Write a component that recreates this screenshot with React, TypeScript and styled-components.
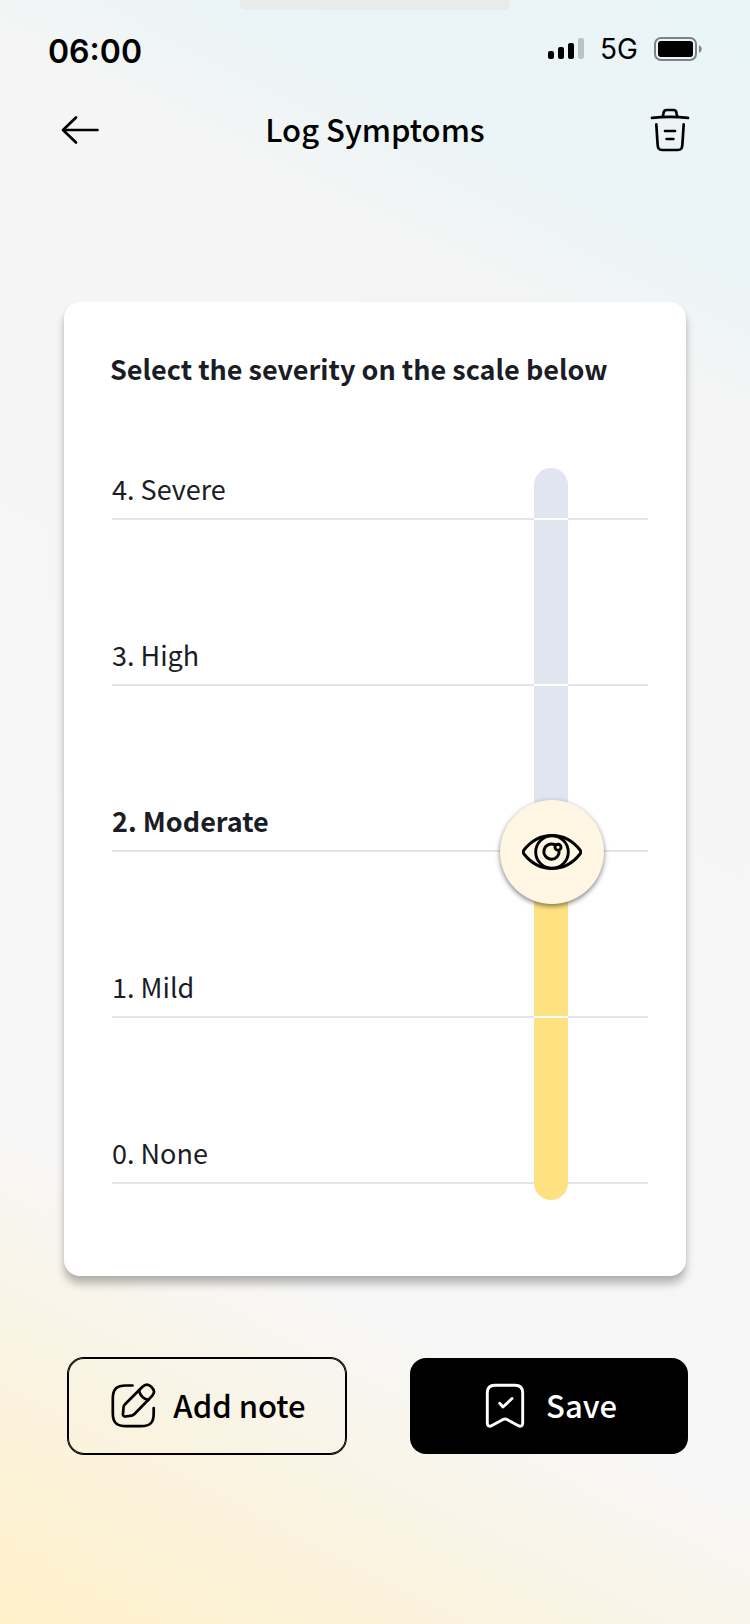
import React, { useState } from 'react';
import styled, { createGlobalStyle } from 'styled-components';

const GlobalStyle = createGlobalStyle`
  *, *::before, *::after { box-sizing: border-box; }
  html { height: 100%; }
  body {
    margin: 0;
    min-height: 100%;
    color: #000;
    font-family: "Source Sans Pro", "Noto Sans CJK JP", sans-serif;
  }
  h1, h2, ul { margin: 0; padding: 0; }
`;

const Screen = styled.div`
  display: flex;
  flex-direction: column;
  min-height: 100vh;
  padding-bottom: 64px;
  background: linear-gradient(27deg, #fff1c9 0%, #faf3e0 13%, #f7f7f7 25%, #f5f5f5 79%, #ebf4f6 86%, #eaf5f7 100%);
`;

const Grabber = styled.div`
  align-self: center;
  width: 36%;
  height: 10px;
  border-radius: 0 0 6px 6px;
  background: #e8ebea;
`;

const StatusBar = styled.div`
  display: flex;
  align-items: center;
  justify-content: space-between;
  height: 80px;
  padding: 0 48px;
  font-family: Inter, sans-serif;
`;

const Clock = styled.time`
  padding-top: 4px;
  font-size: 32px;
  font-weight: 600;
  line-height: 40px;
`;

const StatusIcons = styled.div`
  display: flex;
  align-items: center;
  gap: 16px;
  height: 44px;
  margin-bottom: 2px;
  font-size: 28px;
  line-height: 32px;
`;

const TopBar = styled.header`
  display: grid;
  grid-template-columns: 48px 1fr 48px;
  align-items: center;
  height: 80px;
  padding: 0 56px;
`;

const Title = styled.h1`
  padding-bottom: 2px;
  font-size: 31px;
  font-weight: 500;
  line-height: 46px;
  text-align: center;
`;

const IconButton = styled.button`
  display: flex;
  align-items: center;
  justify-content: center;
  width: 48px;
  height: 48px;
  padding: 0;
  border: 0;
  background: none;
  color: inherit;
  cursor: pointer;
`;

const Card = styled.section`
  margin: 132px 64px 0;
  padding: 47px 0 92px;
  border-radius: 16px;
  background: #fff;
  box-shadow: 0 8px 8px rgba(0, 0, 0, 0.25), 0 2px 4px rgba(0, 0, 0, 0.06);
  color: #1a1d26;
`;

const CardTitle = styled.h2`
  padding: 0 46px 1px;
  font-size: 27px;
  font-weight: 700;
  line-height: 40px;
`;

const Scale = styled.div`
  display: grid;
  grid-template-columns: 1fr 104px 44px;
  margin: 0 38px 0 48px;
`;

const Levels = styled.ul`
  grid-area: 1 / 1 / 2 / -1;
  list-style: none;
`;

const Level = styled.li<{ $active: boolean }>`
  display: flex;
  align-items: flex-end;
  height: 166px;
  padding-bottom: 9px;
  border-bottom: 2px solid #e0e7ec;
  font-size: 27px;
  font-weight: ${(p) => (p.$active ? 700 : 400)};
  line-height: 40px;

  &:first-child { height: 130px; }
`;

const Track = styled.div<{ $level: number }>`
  grid-area: 1 / 2;
  justify-self: center;
  width: 34px;
  margin: 78px 2px -16px 0;
  border-radius: 17px;
  background: linear-gradient(
    to top,
    #fee282 ${(p) => 16 + p.$level * 166}px,
    #e0e5ef ${(p) => 16 + p.$level * 166}px
  );
`;

const Tick = styled.div`
  height: 166px;
  border-bottom: 2px solid #fff;

  &:first-child { height: 52px; }
`;

const Slider = styled.input`
  grid-area: 1 / 2;
  z-index: 1;
  width: 104px;
  height: 768px;
  margin: 78px 0 -52px;
  appearance: none;
  writing-mode: vertical-lr;
  direction: rtl;
  background: none;
  cursor: pointer;

  &::-webkit-slider-thumb {
    appearance: none;
    width: 104px;
    height: 104px;
    border: 0;
    border-radius: 50%;
    background: #fff7e3;
    box-shadow: 0 2px 5px rgba(0, 0, 0, 0.5);
  }
`;

const ThumbIcon = styled.div<{ $level: number }>`
  grid-area: 1 / 2;
  z-index: 2;
  align-self: end;
  justify-self: center;
  display: flex;
  height: 36px;
  margin-bottom: ${(p) => p.$level * 166 - 18}px;
  color: #000;
  pointer-events: none;
`;

const Actions = styled.div`
  display: grid;
  grid-template-columns: 1fr 1fr;
  gap: 64px;
  margin: 82px 62px 0 68px;
`;

const ActionButton = styled.button<{ $filled?: boolean }>`
  display: flex;
  align-items: center;
  justify-content: center;
  gap: 17px;
  height: 96px;
  padding: 0 0 2px;
  border: 0;
  border-radius: 16px;
  background: ${(p) => (p.$filled ? '#000' : 'transparent')};
  color: ${(p) => (p.$filled ? '#fff' : '#000')};
  box-shadow: ${(p) => (p.$filled ? 'none' : '0 0 0 1px #000, inset 0 0 0 1px #000')};
  font-family: inherit;
  font-size: 31px;
  font-weight: 500;
  line-height: 48px;
  cursor: pointer;
`;

const Icon = styled.svg`
  flex: none;
  fill: none;
  stroke: currentColor;
  stroke-linecap: round;
  stroke-linejoin: round;
`;

const SignalIcon = () => (
  <svg width="36" height="22" viewBox="0 0 36 22" aria-label="Signal">
    <rect x="0" y="13" width="6" height="8" rx="2" />
    <rect x="10" y="9" width="6" height="12" rx="2" />
    <rect x="20" y="5" width="6" height="16" rx="2" />
    <rect x="30" y="0" width="6" height="21" rx="2" fill="#bcc3c5" />
  </svg>
);

const BatteryIcon = () => (
  <svg width="48" height="24" viewBox="0 0 48 24" aria-label="Battery">
    <rect x="1" y="1" width="41" height="22" rx="6" fill="none" stroke="#7d8385" strokeWidth="2" />
    <rect x="4" y="4" width="35" height="16" rx="3" />
    <path d="M45 8.2c1.700 0.700 2.700 2.100 2.700 3.800s-1 3.100-2.700 3.800z" fill="#7d8385" />
  </svg>
);

const BackIcon = () => (
  <Icon width="48" height="48" viewBox="0 0 48 48" strokeWidth="2.700">
    <path d="M20 11.500 7 24l13 12.500M7.500 24h34" />
  </Icon>
);

const TrashIcon = () => (
  <Icon width="48" height="48" viewBox="0 0 24 24" strokeWidth="1.350">
    <path d="M21 5.980c-3-.33-6-.5-9-.5s-6 .17-9 .5" />
    <path d="M8.500 5l.22-1.400C8.850 2.500 9.100 2 10.300 2h3.400c1.200 0 1.450.5 1.580 1.600L15.500 5" />
    <path d="M18.850 9.140l-.65 10.070C18.090 20.780 18 22 15.700 22H8.300C6 22 5.910 20.780 5.800 19.210L5.150 9.140" />
    <path d="M10.330 16.500h3.330M9.500 12.500h5" />
  </Icon>
);

const EditIcon = () => (
  <Icon width="48" height="48" viewBox="0 1 48 48" strokeWidth="2.700">
    <path d="M24.500 5.500H18C8.500 5.500 4.800 9 4.800 18.500V33C4.800 42.500 8.500 46.200 18 46.200H33C42.500 46.200 45.700 42.500 45.700 33V28" />
    <path d="M16.800 24.500 34.500 6.800C37.500 3.800 40.500 4 43.500 7C46.500 10 47 13 44 16L26.500 34C25.500 35 24.500 35.500 23.500 35.700L17.500 36.500C15.800 36.700 14.700 35.600 15 33.800L15.500 27.500C15.600 26.200 16 25.300 16.800 24.500Z" />
    <path d="M31 10.500C32 15 35.500 18.800 40.300 20" />
  </Icon>
);

const BookmarkIcon = () => (
  <Icon width="48" height="48" viewBox="0 1 48 48" strokeWidth="2.900">
    <path d="M14 5.300H34C39 5.300 41.700 8 41.700 13V43C41.700 46 39.500 47 37 45.500L26 39.500C24.500 38.700 23.500 38.700 22 39.500L11 45.500C8.500 47 6.300 46 6.300 43V13C6.300 8 9 5.300 14 5.300Z" />
    <path d="M18.700 23.300 22 27l9-8.500" />
  </Icon>
);

const EyeIcon = () => (
  <Icon width="60" height="36" viewBox="0 0 60 36" strokeWidth="2.900">
    <path d="M2 16C9 7 19 1.500 30 1.500S51 7 58 16C59 17.300 59 18.700 58 20C51 29 41 34.500 30 34.500S9 29 2 20C1 18.700 1 17.300 2 16Z" />
    <circle cx="30" cy="18" r="16.300" />
    <path d="M33 10.900A7.600 7.600 0 1 0 37 16.700" />
    <circle cx="36" cy="13.200" r="3" />
  </Icon>
);

const LEVELS = ['4. Severe', '3. High', '2. Moderate', '1. Mild', '0. None'];

export default function App() {
  const [level, setLevel] = useState(2);

  return (
    <>
      <GlobalStyle />
      <Screen>
        <Grabber />
        <StatusBar>
          <Clock>06:00</Clock>
          <StatusIcons>
            <SignalIcon />
            <span>5G</span>
            <BatteryIcon />
          </StatusIcons>
        </StatusBar>
        <TopBar>
          <IconButton type="button" aria-label="Back">
            <BackIcon />
          </IconButton>
          <Title>Log Symptoms</Title>
          <IconButton type="button" aria-label="Delete">
            <TrashIcon />
          </IconButton>
        </TopBar>
        <main>
          <Card>
            <CardTitle id="severity-label">Select the severity on the scale below</CardTitle>
            <Scale>
              <Levels>
                {LEVELS.map((name, i) => (
                  <Level key={name} $active={4 - i === level}>
                    {name}
                  </Level>
                ))}
              </Levels>
              <Track $level={level}>
                <Tick />
                <Tick />
                <Tick />
                <Tick />
              </Track>
              <Slider
                type="range"
                min={0}
                max={4}
                step={1}
                value={level}
                aria-labelledby="severity-label"
                onChange={(e) => setLevel(Number(e.target.value))}
              />
              <ThumbIcon $level={level}>
                <EyeIcon />
              </ThumbIcon>
            </Scale>
          </Card>
          <Actions>
            <ActionButton type="button">
              <EditIcon />
              Add note
            </ActionButton>
            <ActionButton type="button" $filled>
              <BookmarkIcon />
              Save
            </ActionButton>
          </Actions>
        </main>
      </Screen>
    </>
  );
}
